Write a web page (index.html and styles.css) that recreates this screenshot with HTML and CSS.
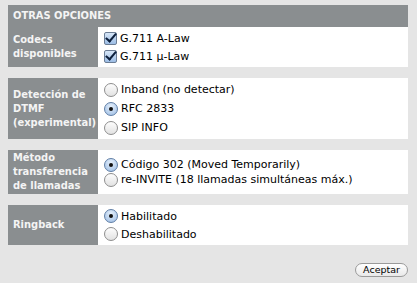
FILE: index.html
```html
<!DOCTYPE html>
<html>
    <head>
        <meta charset="utf-8">
        <title>Otras opciones</title>

        <link rel="stylesheet" href="styles.css">
    </head>

    <body>

        <div class="panel">
            <h2 class="panel-title">OTRAS OPCIONES</h2>

            <!-- codecs -->
            <div class="section section-first">
                <div class="label">Codecs disponibles</div>
                <div class="options">
                    <div class="option"><span class="check"></span>G.711 A-Law</div>
                    <div class="option"><span class="check"></span>G.711 μ-Law</div>
                </div>
            </div>

            <!-- dtmf -->
            <div class="section">
                <div class="label">Detección de DTMF (experimental)</div>
                <div class="options options-wide">
                    <div class="option"><span class="radio"></span>Inband (no detectar)</div>
                    <div class="option"><span class="radio selected"></span>RFC 2833</div>
                    <div class="option"><span class="radio"></span>SIP INFO</div>
                </div>
            </div>

            <!-- transferencia -->
            <div class="section">
                <div class="label">Método transferencia de llamadas</div>
                <div class="options options-compact">
                    <div class="option"><span class="radio selected"></span>Código 302 (Moved Temporarily)</div>
                    <div class="option"><span class="radio"></span>re-INVITE (18 llamadas simultáneas máx.)</div>
                </div>
            </div>

            <!-- ringback -->
            <div class="section">
                <div class="label">Ringback</div>
                <div class="options">
                    <div class="option"><span class="radio selected"></span>Habilitado</div>
                    <div class="option"><span class="radio"></span>Deshabilitado</div>
                </div>
            </div>
        </div>

        <div class="actions">
            <button class="button">Aceptar</button>
        </div>

    </body>
</html>
```

FILE: styles.css
```css
/* Page */

body {
    margin: 0;
    padding: 5px 9px 0 8px;
    background: #e5e5e5;
    font-family: "DejaVu Sans", Verdana, sans-serif;
    font-size: 11px;
    color: #000;
}

/* Panel */

.panel {
    width: 400px;
}

.panel-title,
.label {
    font-family: "DejaVu Sans Condensed", "DejaVu Sans", sans-serif;
    font-stretch: condensed;
    font-weight: bold;
    color: #f4f4f4;
    background: #8a8e90;
}

.panel-title {
    margin: 0;
    height: 22px;
    padding-left: 5px;
    line-height: 22px;
    font-size: 11px;
}

.section {
    display: grid;
    grid-template-columns: 90px 1fr;
    margin-top: 11px;
    background: #fff;
}

.section-first {
    margin-top: 0;
}

.label {
    display: flex;
    align-items: center;
    padding: 1px 2px 1px 5px;
    line-height: 14px;
}

.options {
    display: flex;
    flex-direction: column;
    justify-content: center;
    padding: 2px 0;
}

.options-wide .option {
    height: 19px;
}

.options-compact .option {
    height: 15px;
}

.option {
    display: flex;
    align-items: center;
    height: 18px;
    padding-left: 6px;
}

/* Checkbox & radio */

.check,
.radio {
    position: relative;
    box-sizing: border-box;
    width: 13px;
    height: 13px;
    margin-right: 3px;
    border: 1px solid #8e8e8e;
    background: linear-gradient(#fdfdfd, #e2e2e2);
}

.check {
    border-radius: 2px;
    border-color: #6b7d95;
    background: linear-gradient(#d7e6f7, #9cbde5);
}

.check::after {
    content: "";
    position: absolute;
    left: 3px;
    top: -2px;
    width: 4px;
    height: 9px;
    border: solid #0c1f3c;
    border-width: 0 2px 2px 0;
    transform: rotate(40deg);
}

.radio {
    width: 14px;
    height: 14px;
    border-radius: 50%;
}

.radio.selected {
    border-color: #5f7ea6;
    background: radial-gradient(circle at 50% 30%, #e4effb, #9dbde4);
}

.radio.selected::after {
    content: "";
    position: absolute;
    left: 4px;
    top: 4px;
    width: 4px;
    height: 4px;
    border-radius: 50%;
    background: #111;
}

/* Button */

.actions {
    display: flex;
    justify-content: flex-end;
    width: 400px;
    margin-top: 18px;
}

.button {
    height: 14px;
    padding: 0 7px;
    font-family: "DejaVu Sans", Verdana, sans-serif;
    font-size: 9.5px;
    line-height: 12px;
    border: 1px solid #9a9a9a;
    border-radius: 7px;
    background: linear-gradient(#fff, #e9e9e9);
    color: #000;
}
```
